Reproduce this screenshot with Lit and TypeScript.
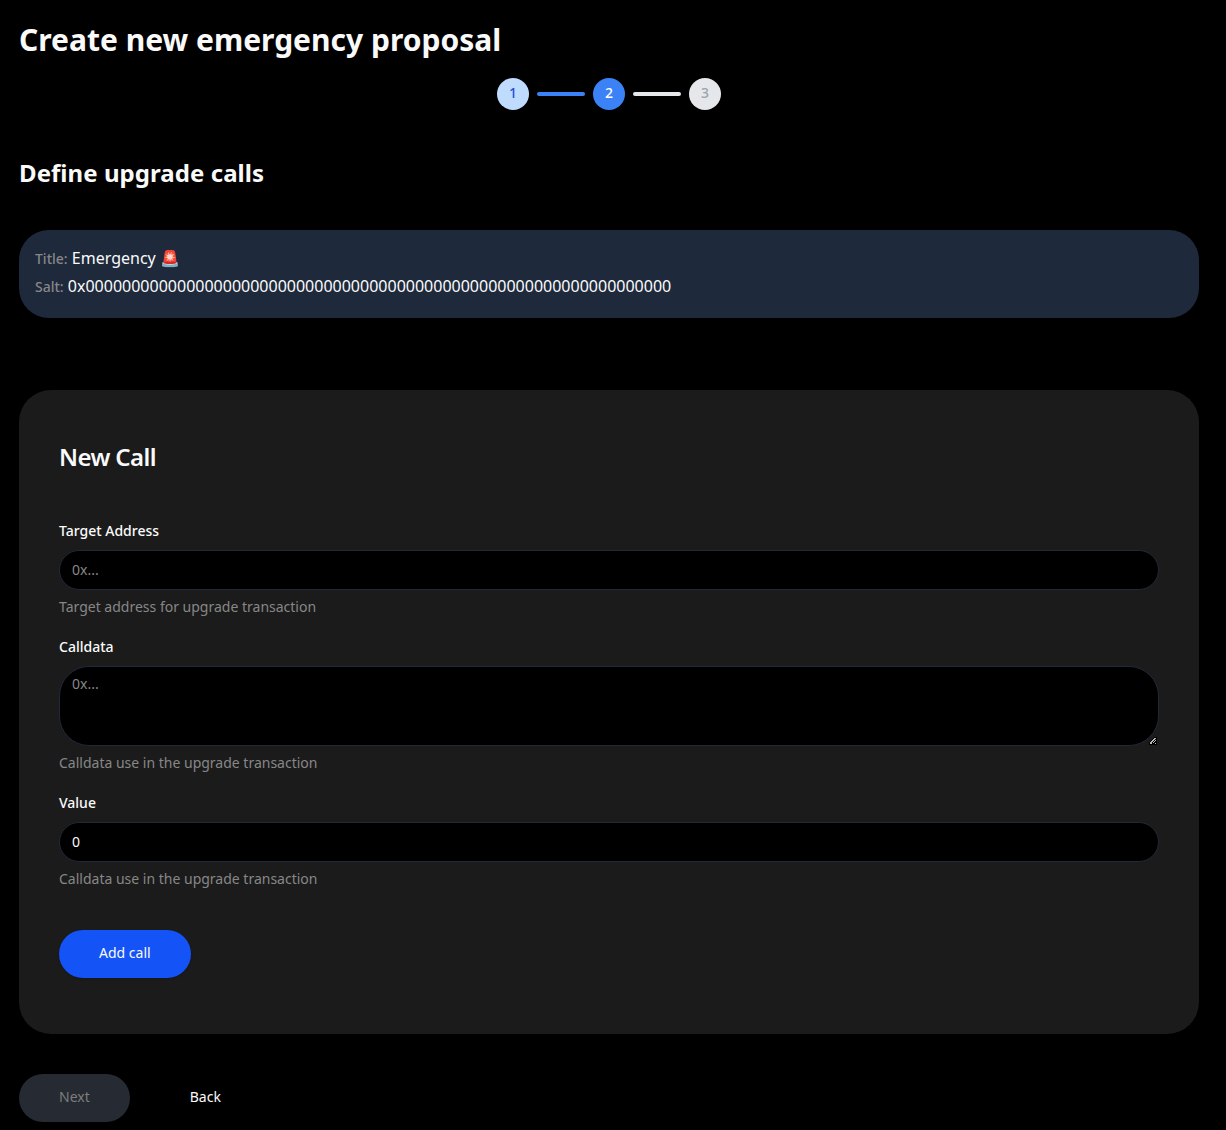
import { LitElement, html, css } from "lit";
import { customElement } from "lit/decorators.js";

@customElement("app-root")
export class AppRoot extends LitElement {
  static styles = css`
    :host {
      display: block;
      box-sizing: border-box;
      min-height: 1130px;
      background: #000;
      color: #fafafa;
      font-family: "Noto Sans", sans-serif;
      font-size: 14px;
      line-height: 20px;
    }
    * {
      box-sizing: border-box;
      margin: 0;
    }
    .page {
      width: 1180px;
      margin-left: 19px;
      padding-top: 22px;
    }
    .title {
      font-size: 30px;
      line-height: 36px;
      font-weight: 700;
    }
    .steps {
      display: flex;
      justify-content: center;
      align-items: center;
      gap: 8px;
      margin-top: 20px;
    }
    .step {
      width: 32px;
      height: 32px;
      border-radius: 50%;
      display: flex;
      align-items: center;
      justify-content: center;
      padding-bottom: 2px;
      font-weight: 500;
    }
    .done {
      background: #bfdbfe;
      color: #1d4ed8;
    }
    .current {
      background: #3b82f6;
      color: #fff;
    }
    .todo {
      background: #e5e7eb;
      color: #9ca3af;
    }
    .bar {
      width: 48px;
      height: 4px;
      border-radius: 2px;
      background: #e5e7eb;
    }
    .filled {
      background: #3b82f6;
    }
    .subtitle {
      margin-top: 47px;
      font-size: 24px;
      line-height: 32px;
      font-weight: 700;
      letter-spacing: 0.06px;
    }
    .summary {
      margin-top: 41px;
      height: 88px;
      padding: 14px 16px;
      border-radius: 30px;
      background: #1e293b;
      font-size: 16px;
      line-height: 28px;
    }
    .key {
      font-size: 14px;
      line-height: 20px;
      font-weight: 500;
      color: #878787;
    }
    .card {
      margin-top: 72px;
      height: 644px;
      padding: 51px 40px 0;
      border-radius: 32px;
      background: #1b1b1b;
    }
    .card-title {
      font-size: 24px;
      line-height: 32px;
      font-weight: 600;
      letter-spacing: -0.6px;
    }
    .fields {
      display: flex;
      flex-direction: column;
      gap: 20px;
      margin-top: 48px;
    }
    .field {
      display: flex;
      flex-direction: column;
    }
    .label {
      font-weight: 500;
      margin-bottom: 9px;
    }
    .control {
      display: block;
      width: 100%;
      height: 40px;
      padding: 7px 12px 9px;
      border: 1px solid #1e293b;
      border-radius: 30px;
      background: #000;
      color: #fafafa;
      font: inherit;
      outline: none;
    }
    .control::placeholder {
      color: #878787;
      opacity: 1;
    }
    .area-wrap {
      position: relative;
    }
    .area {
      height: 80px;
      resize: none;
    }
    .grip {
      position: absolute;
      right: 2px;
      bottom: 1px;
      width: 8px;
      height: 8px;
    }
    .hint {
      margin-top: 7px;
      color: #878787;
    }
    .button {
      height: 48px;
      padding: 0 40px 2px;
      border: none;
      border-radius: 24px;
      background: transparent;
      color: #fafafa;
      font: inherit;
    }
    .add {
      margin-top: 41px;
      background: #1453f5;
      box-shadow: 0 1px 2px rgba(0, 0, 0, 0.2);
    }
    .actions {
      display: flex;
      gap: 20px;
      margin-top: 40px;
    }
    .next {
      background: #262a32;
      color: #7d7d7d;
    }
  `;

  private salt = "0x" + "0".repeat(64);

  render() {
    return html`
      <main class="page">
        <h1 class="title">Create new emergency proposal</h1>
        <div class="steps">
          <div class="step done">1</div>
          <div class="bar filled"></div>
          <div class="step current">2</div>
          <div class="bar"></div>
          <div class="step todo">3</div>
        </div>
        <h2 class="subtitle">Define upgrade calls</h2>
        <section class="summary">
          <p><span class="key">Title:</span> Emergency 🚨</p>
          <p><span class="key">Salt:</span> ${this.salt}</p>
        </section>
        <section class="card">
          <h3 class="card-title">New Call</h3>
          <div class="fields">
            <div class="field">
              <label class="label" for="target">Target Address</label>
              <input class="control" id="target" placeholder="0x..." />
              <p class="hint">Target address for upgrade transaction</p>
            </div>
            <div class="field">
              <label class="label" for="calldata">Calldata</label>
              <div class="area-wrap">
                <textarea class="control area" id="calldata" placeholder="0x..."></textarea>
                <svg class="grip" viewBox="0 0 8 8" shape-rendering="crispEdges">
                  <path fill="#000" d="M5 0h3v8H0V5z" />
                  <path
                    fill="#b8b8b8"
                    d="M5 1h2v1h-1v1h-1v1h-1v1h-1v1h-1v1h-1v-2h1v-1h1v-1h1v-1h1zM5 2h1v1h-1zM6 3h1v1h-1zM5 4h1v1h-1zM4 5h1v1h-1zM6 6h1v1h-1zM2 6h1v1h-1z"
                  />
                </svg>
              </div>
              <p class="hint">Calldata use in the upgrade transaction</p>
            </div>
            <div class="field">
              <label class="label" for="value">Value</label>
              <input class="control" id="value" value="0" />
              <p class="hint">Calldata use in the upgrade transaction</p>
            </div>
          </div>
          <button class="button add">Add call</button>
        </section>
        <div class="actions">
          <button class="button next" disabled>Next</button>
          <button class="button">Back</button>
        </div>
      </main>
    `;
  }
}
